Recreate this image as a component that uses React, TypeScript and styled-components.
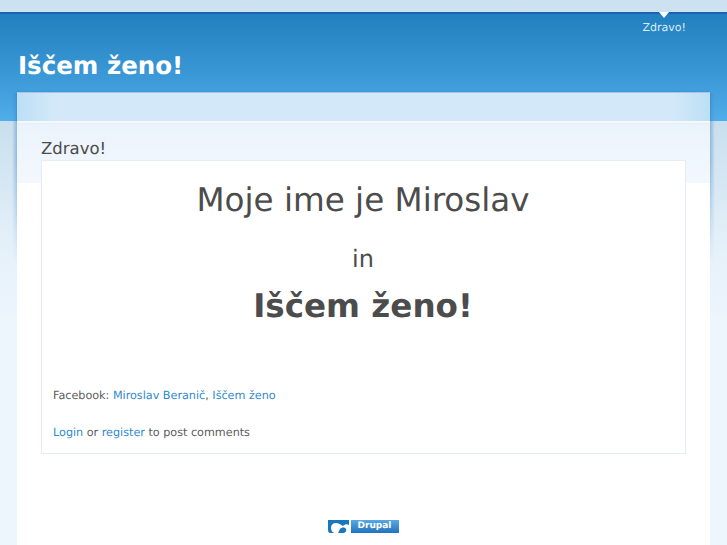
import React from "react";
import styled, { createGlobalStyle } from "styled-components";

const GlobalStyle = createGlobalStyle`
  html, body {
    margin: 0;
    padding: 0;
    height: 545px;
    overflow: hidden;
    background: #edf5fd;
    font-family: "DejaVu Sans", sans-serif;
    color: #4c4c4c;
    text-rendering: geometricPrecision;
  }
`;

const Page = styled.div`
  height: 545px;
  overflow: hidden;
  display: flex;
  flex-direction: column;
  background: linear-gradient(to bottom, #c9dfee 121px, #d5e7f3 180px, #e4f0f9 240px, #edf5fd 320px);
`;

const TopStrip = styled.div`
  height: 12px;
  flex: none;
  background: #cde2f0;
`;

const Header = styled.header`
  height: 109px;
  flex: none;
  box-sizing: border-box;
  border-top: 2px solid #1f62b2;
  background: linear-gradient(to bottom, #2180bf, #3f9bd9 65%, #50aeea);
  padding: 0 18px;
  position: relative;
  display: flex;
  flex-direction: column;
`;

const Nav = styled.nav`
  display: flex;
  justify-content: flex-end;
  padding: 7px 23px 0 0;
`;

const NavLink = styled.a`
  position: relative;
  font-size: 11px;
  line-height: 14px;
  color: #dcecf8;

  &::before {
    content: "";
    position: absolute;
    top: -9px;
    left: 50%;
    margin-left: -5.500px;
    border-left: 5.500px solid transparent;
    border-right: 5.500px solid transparent;
    border-top: 6px solid #fff;
  }
`;

const SiteName = styled.h1`
  margin: 16px 0 0;
  font-size: 24.500px;
  line-height: 30px;
  font-weight: bold;
  color: #fff;
`;

const Panel = styled.main`
  flex: 1;
  margin: -29px 17px 0;
  position: relative;
  border-top: 1px solid #e4f1fb;
  background: linear-gradient(to bottom, #eaf3fc 28px, #f3f8fd 90px, #fff 90px);
  display: flex;
  flex-direction: column;

  &::before,
  &::after {
    content: "";
    position: absolute;
    top: 0;
    width: 5px;
    height: 170px;
    mask-image: linear-gradient(to bottom, #000 40%, transparent);
  }

  &::before {
    left: -5px;
    background: linear-gradient(to left, rgba(70, 135, 195, 0.45), rgba(70, 135, 195, 0));
  }

  &::after {
    right: -5px;
    background: linear-gradient(to right, rgba(70, 135, 195, 0.45), rgba(70, 135, 195, 0));
  }
`;

const PanelTop = styled.div`
  height: 28px;
  flex: none;
  border-bottom: 2px solid #f3f9fe;
  box-shadow: 0 -1px 2px rgba(30, 100, 190, 0.45);
  background: linear-gradient(
    to right,
    #bcdff5,
    #d3e9f9 38px,
    #d3e9f9 calc(100% - 38px),
    #bcdff5
  );
`;

const Content = styled.div`
  padding: 16px 24px 0;
  display: flex;
  flex-direction: column;
`;

const PageTitle = styled.h2`
  margin: 0;
  font-size: 16.500px;
  line-height: 20px;
  font-weight: normal;
  color: #4c4c4c;
`;

const Card = styled.article`
  height: 294px;
  box-sizing: border-box;
  margin-top: 1px;
  background: #fff;
  border: 1px solid #e6ebf5;
  padding: 0 11px;
`;

const Intro = styled.div`
  text-align: center;
  padding-top: 20px;
  height: 227px;
  box-sizing: border-box;
  margin-right: 1px;
`;

const Name = styled.h1`
  margin: 0;
  font-size: 32.600px;
  line-height: 38px;
  font-weight: normal;
`;

const Joiner = styled.h2`
  margin: 26px 0 0;
  font-size: 24px;
  line-height: 28px;
  font-weight: normal;
`;

const Big = styled.h1`
  margin: 14px 0 0;
  font-size: 32.600px;
  line-height: 38px;
  font-weight: bold;
`;

const Line = styled.p`
  margin: 0 0 21px;
  font-size: 11.200px;
  line-height: 16px;
  color: #5c5c5c;
`;

const Link = styled.a`
  color: #2f8ace;
`;

const Footer = styled.footer`
  display: flex;
  justify-content: center;
  padding-top: 66px;
`;

const Badge = styled.div`
  display: flex;
  width: 71px;
  height: 13px;
  margin-left: -1px;
`;

const BadgeLogo = styled.div`
  width: 23px;
  display: flex;
`;

const BadgeName = styled.div`
  flex: 1;
  background: linear-gradient(to bottom, #5aa8e2, #1f74bd);
  color: #fff;
  font-size: 9px;
  font-weight: bold;
  line-height: 13px;
  text-align: center;
`;

function DropLogo() {
  return (
    <svg width="23" height="13" viewBox="0 0 23 13">
      <path d="M0 0H21V5C19 4 17 4 15 6C12 4 10 3 8 3C5 3 3 5 3 8C3 10 4 12 6 13H2C1 13 0 12 0 10Z" fill="#1878bd" />
      <path d="M12 9C14 7 17 7 18 9C19 11 17 13 15 13H10C11 12 11 10 12 9Z" fill="#1878bd" />
    </svg>
  );
}

export default function App() {
  return (
    <Page>
      <GlobalStyle />
      <TopStrip />
      <Header>
        <Nav>
          <NavLink>Zdravo!</NavLink>
        </Nav>
        <SiteName>Iščem ženo!</SiteName>
      </Header>
      <Panel>
        <PanelTop />
        <Content>
          <PageTitle>Zdravo!</PageTitle>
          <Card>
            <Intro>
              <Name>Moje ime je Miroslav</Name>
              <Joiner>in</Joiner>
              <Big>Iščem ženo!</Big>
            </Intro>
            <Line>
              Facebook: <Link>Miroslav Beranič</Link>, <Link>Iščem ženo</Link>
            </Line>
            <Line>
              <Link>Login</Link> or <Link>register</Link> to post comments
            </Line>
          </Card>
          <Footer>
            <Badge>
              <BadgeLogo>
                <DropLogo />
              </BadgeLogo>
              <BadgeName>Drupal</BadgeName>
            </Badge>
          </Footer>
        </Content>
      </Panel>
    </Page>
  );
}
